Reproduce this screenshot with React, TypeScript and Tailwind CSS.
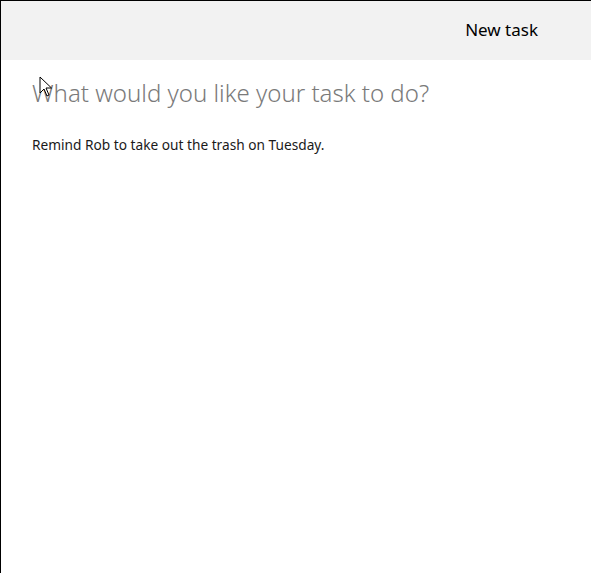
export default function App() {
  return (
    <div
      className="relative h-[573px] w-[591px] overflow-hidden border-l border-t border-black bg-white"
      style={{ fontFamily: "'Noto Sans', 'Open Sans', sans-serif" }}
    >
      <header className="flex h-[59px] items-center justify-end bg-[#f2f2f2] pr-[53px]">
        <span className="mb-[2px] text-[17px] leading-[24px] text-black">New task</span>
      </header>
      <main className="px-[31px] pt-[16px]">
        <h1 className="text-[24px] font-light leading-[34px] text-[#7a7a7a]">
          What would you like your task to do?
        </h1>
        <p className="mt-[26px] text-[13.7px] leading-[18px] text-[#1a1a1a]">
          Remind Rob to take out the trash on Tuesday.
        </p>
      </main>
      {/* mouse pointer over the heading */}
      <svg
        className="absolute left-[38px] top-[75px]"
        width="14"
        height="22"
        viewBox="0 0 14 22"
      >
        <path
          d="M1 1 L1 17 L5 13 L8 20 L10 19 L7 12 L12.5 12 Z"
          fill="white"
          stroke="black"
          strokeWidth="1"
          strokeLinejoin="miter"
        />
      </svg>
    </div>
  );
}
